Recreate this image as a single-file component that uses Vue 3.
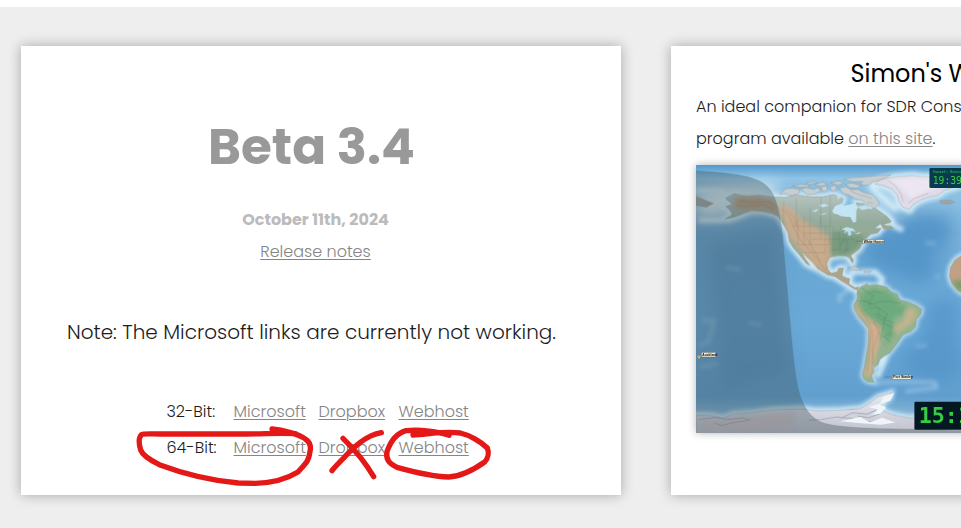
<template>
  <main class="page">
    <div class="cards">
      <!-- Release card -->
      <section class="card release">
        <h1>Beta 3.4</h1>
        <div class="details">
          <p class="date">October 11th, 2024</p>
          <p><a href="#notes">Release notes</a></p>
        </div>
        <p class="note">Note: The Microsoft links are currently not working.</p>
        <div class="downloads">
          <div v-for="build in builds" :key="build" class="download-row">
            <span>{{ build }}:</span>
            <a v-for="host in hosts" :key="host" :href="`#${host.toLowerCase()}`">{{ host }}</a>
          </div>
          <svg class="marks" viewBox="0 0 1110 315" aria-hidden="true">
            <path d="M426 102C455 105 505 116 526 132C541 142 543 157 540 170C536 200 528 204 504 231C462 257 418 264 376 265L325 264C240 256 160 236 88 209C62 196 38 182 32 165C26 145 27 127 34 119C40 115 60 117 90 117L350 117C405 117 450 112 497 116" />
            <path d="M639 130C668 158 705 200 731 245M754 113C708 121 672 155 640 190C628 202 614 216 606 227" />
            <path d="M957 121C925 110 872 103 828 107C799 115 782 138 771 170C766 194 780 208 801 217C848 230 899 244 956 246C1000 244 1037 220 1064 201C1077 187 1076 169 1072 159C1053 140 1018 120 991 114C939 108 899 117 849 120" />
          </svg>
        </div>
      </section>

      <!-- World clock card -->
      <section class="card world">
        <h2>Simon's World Clock</h2>
        <p>
          An ideal companion for SDR Console is the World Map<br>
          program available <a href="#map">on this site</a>.
        </p>
        <svg class="map" viewBox="18 30 1647 804" role="img" aria-label="World map">
          <defs>
            <linearGradient id="ocean" x2="0" y2="1">
              <stop offset="0" stop-color="#5599cd" />
              <stop offset=".05" stop-color="#8fc4e6" />
              <stop offset=".25" stop-color="#6aa6d3" />
              <stop offset=".6" stop-color="#69a9d8" />
              <stop offset=".86" stop-color="#619fcf" />
              <stop offset="1" stop-color="#a9cbdc" />
            </linearGradient>
            <linearGradient id="north" x2="0" y2="1">
              <stop offset="0" stop-color="#b7c4c2" />
              <stop offset=".3" stop-color="#93ab9b" />
              <stop offset=".65" stop-color="#9fac91" />
              <stop offset="1" stop-color="#b8a084" />
            </linearGradient>
            <linearGradient id="ice" x2="0" y2="1">
              <stop offset="0" stop-color="#e5eaf3" />
              <stop offset="1" stop-color="#c3c1cd" />
            </linearGradient>
            <filter id="soft" x="-20%" y="-20%" width="140%" height="140%">
              <feGaussianBlur stdDeviation="6" />
            </filter>
            <filter id="wide" x="-40%" y="-40%" width="180%" height="180%">
              <feGaussianBlur stdDeviation="24" />
            </filter>
            <path id="america" d="M106 130L132 116L170 124L205 120L244 125L283 127L318 119L362 125L398 125L430 118L459 130L456 143L432 153L428 171L452 184L480 185L490 201L498 185L491 171L503 158L497 143L520 145L540 163L553 158L572 171L590 184L603 198L597 205L568 208L552 220L573 219L562 233L541 238L526 252L514 267L508 280L494 291L481 301L490 315L486 324L478 310L468 302L446 301L418 306L409 325L414 345L424 354L441 349L445 339L460 338L455 361L467 367L478 370L476 386L494 397L505 395L501 405L487 399L470 387L452 376L434 364L412 359L382 340L369 322L350 305L332 288L346 312L360 331L349 326L326 297L310 279L297 258L294 233L283 214L266 185L246 175L218 169L184 166L161 175L133 186L104 192L127 178L118 164L107 154L127 147Z" />
            <path id="south" d="M507 397L531 385L535 391L558 388L588 395L603 410L620 416L629 434L653 440L679 451L694 462L690 478L678 492L675 515L661 529L638 538L622 561L609 579L598 593L581 602L568 612L563 628L548 636L551 650L543 659L548 674L552 681L532 679L521 671L516 658L522 635L527 603L533 570L535 520L520 502L505 484L493 463L491 448L501 431L500 410Z" />
            <path id="greenland" d="M570 74L616 65L666 61L706 66L756 61L830 62L817 88L761 106L741 121L712 127L692 134L668 148L657 164L636 155L626 140L621 120L606 103L581 92L554 87Z" />
            <path id="antarctica" d="M18 779L62 780L98 788L128 776L190 771L248 763L330 760L382 766L449 764L509 759L535 745L563 724L602 712L599 727L573 744L577 766L608 778L655 787L701 785L780 778L1665 760L1665 834L18 834Z" />
            <path id="africa" d="M1665 260L870 280L815 300L793 315L780 337L777 363L784 384L803 406L840 425L890 435L940 560L980 680L1060 620L1150 430L1665 390Z" />
          </defs>

          <rect x="18" y="30" width="1647" height="804" fill="url(#ocean)" />

          <!-- sea floor -->
          <g filter="url(#wide)">
            <path d="M540 245L610 225L675 160L760 185L790 250L735 270L730 360L690 390L615 358L520 315Z" fill="#4c8fc4" opacity=".7" />
            <path d="M715 440L800 430L813 660L730 688L620 630L700 530Z" fill="#4f90c5" opacity=".6" />
            <path d="M55 270L255 230L300 650L100 700Z" fill="#548dbd" opacity=".5" />
            <path d="M540 85L610 100L640 165L590 185L545 140Z" fill="#b4d9ee" />
            <path d="M18 110L110 95L260 85L255 120L110 180L18 190Z" fill="#e2eef0" />
            <path d="M650 160L750 130L830 130L812 300" fill="none" stroke="#a5d2ed" stroke-width="20" opacity=".7" />
          </g>
          <g fill="none" stroke="#d3ecf8" filter="url(#soft)">
            <use href="#america" stroke-width="20" />
            <use href="#south" stroke-width="11" />
            <use href="#greenland" stroke-width="22" />
            <use href="#antarctica" stroke-width="18" />
            <use href="#africa" stroke-width="15" />
            <path d="M596 205L638 225M565 617L585 612L561 666M476 370L485 351L555 350L576 372L568 393M25 195L75 195L120 193L180 170L225 170M540 95L620 165M18 105L110 110" stroke-width="15" />
            <path d="M550 685L600 680L690 679L734 681L739 697L645 708M485 397L447 423L449 442" stroke-width="7" opacity=".6" />
            <path d="M35 495L73 494L55 560L25 570M27 635L85 625M105 335L154 344M175 500L215 510M705 262L735 265M675 573L710 570M748 360L735 366" stroke-width="8" opacity=".35" />
          </g>

          <!-- land -->
          <g stroke="#8a8380" stroke-width="1" stroke-linejoin="round">
            <use href="#america" fill="url(#north)" />
            <use href="#south" fill="#91b48e" />
            <use href="#greenland" fill="#dedce9" />
            <use href="#africa" fill="#c0a183" />
            <use href="#antarctica" fill="url(#ice)" />
            <path d="M18 124L49 137L70 145L49 156L18 151ZM748 136L780 135L792 142L771 147L751 144Z" fill="#a2a5a0" />
            <path d="M268 117L287 101L307 99L328 103L326 116L300 121L283 115ZM332 101L351 98L371 103L381 98L393 106L376 116L350 119ZM390 96L407 92L413 103L401 111ZM419 94L436 91L439 104L425 109ZM305 93L331 87L360 92L350 97L326 95ZM372 87L398 82L414 88L392 93ZM421 83L445 78L461 84L442 90ZM447 99L466 95L482 104L503 103L520 112L546 119L561 133L568 147L552 160L529 148L516 135L494 131L477 121L457 114ZM459 73L489 67L520 66L560 62L602 60L567 76L546 81L534 91L508 89L518 79L490 80ZM466 88L485 84L513 91L500 99L477 97ZM348 83L374 79L381 84L356 87ZM472 337L494 334L515 345L490 344ZM522 346L543 348L538 353L520 351Z" fill="#c5ced1" />
            <path d="M572 208L584 204L596 209L610 219L593 223L578 219Z" fill="#9fa98b" />
          </g>
          <g filter="url(#soft)">
            <path d="M267 149L299 155L330 190L384 220L425 254L428 285L408 326L412 350L380 335L337 290L303 252L283 209Z" fill="#d3aa8b" opacity=".8" />
            <path d="M135 126L206 126L252 137L271 178L222 164L164 165L132 158Z" fill="#bc9d80" />
            <path d="M433 225L481 240L524 239L503 279L471 299L421 300L420 254Z" fill="#779b80" />
            <path d="M514 414L550 397L602 416L630 448L653 453L636 480L609 485L613 535L589 566L573 516L532 490L507 466Z" fill="#6daa7d" />
            <path d="M497 439L515 472L541 493L568 513L567 563L557 600L540 665L520 662L534 615L538 551L532 504L497 470Z" fill="#d5ae91" />
            <path d="M648 457L680 460L674 493L645 520L614 537L608 515L637 497Z" fill="#c0b48e" />
            <path d="M786 375L821 376L850 425L796 400Z" fill="#769d6e" />
            <path d="M591 74L682 68L798 72L718 105L661 132L632 99Z" fill="#ece6f2" />
            <path d="M46 800L166 785L259 773L318 769L302 820L18 825Z" fill="#d3bec0" opacity=".6" />
          </g>
          <path d="M426 166L442 149L466 151L485 146L502 153L498 170L497 201L489 202L480 185L461 184L445 177L430 175Z" fill="#c3e5f3" />
          <path d="M453 224L468 216L488 220L496 230L481 227L483 239L475 243L472 228L460 235L466 225ZM493 235L512 231L505 237ZM386 151L402 145L415 151L397 157ZM364 169L384 160L379 170ZM390 178L415 170L400 179ZM442 119L453 125L441 134ZM500 155L526 150L537 160L516 165ZM579 207L608 204L594 213Z" fill="#bae1ef" />
          <path d="M276 162L301 189L312 220L329 252L356 282L383 313L406 345M289 163L311 186L324 222L350 247L367 280L392 320M508 409L515 433L503 456L530 489L543 522L537 590L531 653M551 495L563 534L549 580L546 628M148 135L188 143L236 139L261 157M137 151L170 154L216 149L251 165M591 76L615 92L633 119L638 141M653 145L672 130L714 115M480 108L508 119L544 130M532 142L548 145" class="ridge" />
          <path d="M305 213H418V269H323M323 188V267M342 182V268M360 157V269M391 184V252M405 213V300M429 213V298M449 230V298M342 234H450M365 252H490M342 292H403M420 284H486M467 246V298M481 248L501 260M280 140V210M318 132V213M392 127V213M420 119V213M516 399L534 420L548 407L571 413L594 405M501 437L535 437L538 460L564 455L565 489L605 500L600 535L568 548M541 500L565 515L573 558L591 578M549 523L546 630" class="border" />
          <path d="M515 398L547 419L538 447L578 437L631 443M519 436L554 451L591 476L578 502L605 516M552 475L585 488L574 539L602 560M443 270L468 253L474 278L457 296M449 211L463 244L448 280" class="river" />
          <path d="M28 792L77 786L115 792L157 787L180 794L133 801L94 810L74 803M356 794L395 792L440 785L492 790L528 801L578 792M452 788L487 772L529 776L563 762M501 782L536 787L568 775" class="icecap" />
          <path d="M449 797L510 785L538 800L575 787L615 801L571 808L512 803ZM579 724L612 713L600 735L570 747L587 757L569 775L545 779L562 762L534 755L570 744Z" fill="#eff5f8" />

          <!-- night side -->
          <path d="M18 47C100 55 208 56 239 103C268 138 278 234 283 314C294 426 303 555 314 641C323 721 344 785 401 803C480 824 627 818 780 824L1665 824V834H18Z" fill="#3f545c" fill-opacity=".38" />
          <path d="M18 47C100 55 208 56 239 103C268 138 278 234 283 314C294 426 303 555 314 641C323 721 344 785 401 803C480 824 627 818 780 824" fill="none" stroke="#477576" stroke-opacity=".35" stroke-width="2" />

          <!-- places and clocks -->
          <g class="place">
            <path d="M499 258H518M581 665H608" />
            <rect x="517" y="253" width="64" height="12" />
            <text x="520" y="263">White House</text>
            <rect x="606" y="659" width="57" height="13" />
            <text x="609" y="669">Port Stanley</text>
            <rect x="34" y="591" width="43" height="14" />
            <text x="37" y="602">Auckland</text>
            <circle cx="27" cy="605" r="6" class="pin" />
          </g>
          <rect x="717" y="39" width="170" height="60" rx="4" fill="#063c4e" />
          <text x="727" y="53" class="clock-label">Sunset: Boston</text>
          <text x="727" y="87" class="clock small">19:39:18</text>
          <rect x="672" y="739" width="260" height="84" rx="4" fill="#031821" />
          <text x="685" y="804" class="clock">15:19:18</text>
        </svg>
      </section>
    </div>
  </main>
</template>

<script setup>
const builds = ['32-Bit', '64-Bit']
const hosts = ['Microsoft', 'Dropbox', 'Webhost']
</script>

<style>
body {
  background-color: #eee;
}
</style>

<style scoped>
.page {
  min-height: 100vh;
  box-sizing: border-box;
  overflow: hidden;
  border-top: 7px solid #fff;
  padding: 39px 21px 33px;
  background-color: #eee;
  color: #1c1c1c;
  font-family: Poppins, Inter, sans-serif;
  font-size: 16px;
  font-weight: 300;
  line-height: 32px;
}

.cards {
  display: grid;
  grid-template-columns: repeat(2, minmax(600px, 62vw));
  gap: 50px;
}

.card {
  box-sizing: border-box;
  background-color: #fff;
  box-shadow: 0 0 12px rgba(0, 0, 0, 0.3);
}

h1,
h2,
p {
  margin: 0;
}

a {
  color: #858585;
  text-decoration: underline;
  text-decoration-thickness: 1px;
  text-underline-offset: 2px;
}

.release {
  padding: 69px 19px 29px 0;
  text-align: center;
}

.release h1 {
  color: #999;
  font-size: 50px;
  font-weight: 700;
  line-height: 64px;
}

.details {
  margin-top: 25px;
  padding-left: 8px;
}

.date {
  color: #bbb;
  font-weight: 700;
}

.note {
  margin-top: 48px;
  font-size: 20px;
}

.downloads {
  position: relative;
  margin-top: 46px;
  padding-left: 12px;
}

.download-row {
  display: grid;
  grid-template-columns: 67px 85px 80px 70px;
  justify-content: center;
  line-height: 36px;
  text-align: left;
}

.marks {
  position: absolute;
  top: 1px;
  left: 109px;
  width: 370px;
  fill: none;
  stroke: #e51818;
  stroke-width: 16;
  stroke-linecap: round;
  stroke-linejoin: round;
  pointer-events: none;
}

.world {
  padding: 12px 25px 60px;
}

.world h2 {
  margin-bottom: 1px;
  color: #000;
  font-size: 24px;
  font-weight: 400;
  text-align: center;
}

.map {
  display: block;
  width: 100%;
  margin-top: 10px;
  box-shadow: 0 0 8px rgba(0, 0, 0, 0.3);
}

.ridge,
.border,
.river,
.icecap {
  fill: none;
}

.ridge {
  stroke: #93765f;
  stroke-width: 2;
  opacity: 0.4;
}

.border {
  stroke: #5f6e60;
  stroke-width: 1;
  opacity: 0.5;
}

.river {
  stroke: #477f62;
  stroke-width: 2;
  opacity: 0.4;
}

.icecap {
  stroke: #9099a7;
  stroke-width: 3;
  opacity: 0.6;
}

.place {
  fill: #e9eadb;
  stroke: #514d45;
  stroke-width: 1;
}

.place text {
  fill: #111;
  stroke: none;
  font-family: "Liberation Sans", sans-serif;
  font-size: 10px;
  font-weight: 700;
}

.place .pin {
  fill: #a9b399;
}

.clock,
.clock-label {
  fill: #35ce43;
  font-family: "DejaVu Sans Mono", monospace;
}

.clock {
  font-size: 65px;
  font-weight: 700;
}

.clock.small {
  font-size: 29px;
  font-weight: 400;
}

.clock-label {
  font-size: 11px;
}
</style>
